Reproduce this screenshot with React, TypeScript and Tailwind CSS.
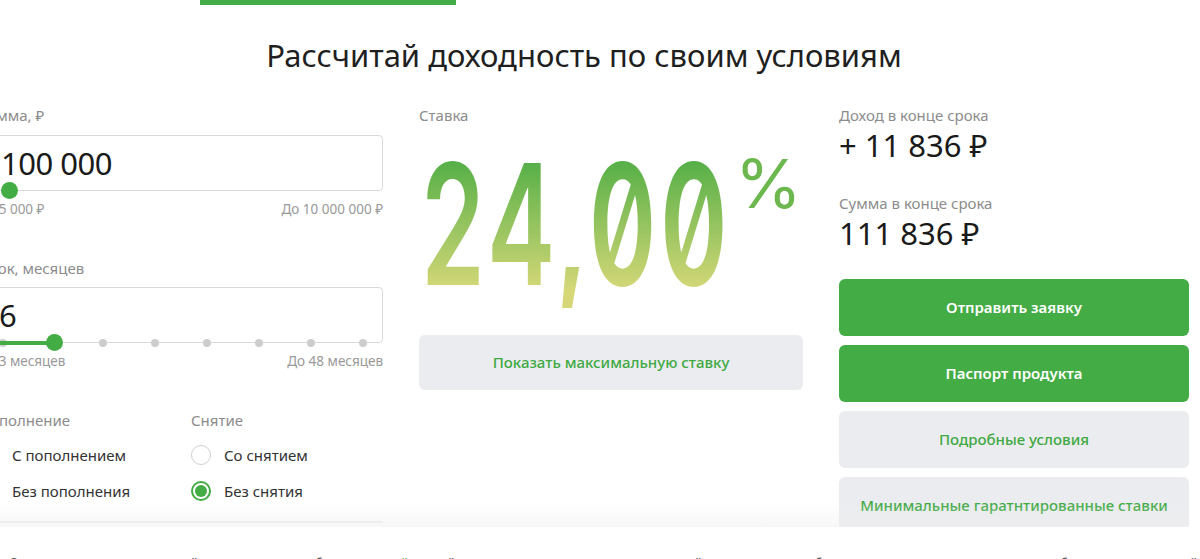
import React from 'react'

const termDots = [24, 124, 176, 228, 280, 332, 384]

function Label({ children }: { children: React.ReactNode }) {
  return <div className="h-5 text-[15px] leading-5 text-[#8c8c8c] whitespace-nowrap">{children}</div>
}

function Radio({ checked, label }: { checked?: boolean; label: string }) {
  return (
    <div className="flex h-6 items-center gap-[13px]">
      {checked ? (
        <span className="flex h-5 w-5 items-center justify-center rounded-full border-2 border-[#43ac45]">
          <span className="h-3 w-3 rounded-full bg-[#43ac45]" />
        </span>
      ) : (
        <span className="h-5 w-5 rounded-full border-[1.5px] border-[#cfcfcf]" />
      )}
      <span className="text-[15px] text-[#333]">{label}</span>
    </div>
  )
}

function Button({ green, children }: { green?: boolean; children: React.ReactNode }) {
  return (
    <div
      className={
        'flex h-[57px] shrink-0 items-center justify-center rounded-[6px] text-[15px] ' +
        (green ? 'bg-[#43ac45] font-semibold text-white' : 'bg-[#ebecef] font-medium text-[#3fa943]')
      }
    >
      {children}
    </div>
  )
}

export default function App() {
  return (
    <div className="h-[559px] w-full overflow-hidden bg-white font-['Noto_Sans',sans-serif] text-[#1a1a1a]">
      <div className="ml-[200px] h-[5px] w-[256px] bg-[#43ac45]" />

      <div className="ml-[-21px] w-[1210px]">
        <h2 className="mt-[30px] text-center text-[31px] leading-[40px] text-[#1f1f1f]">
          Рассчитай доходность по своим условиям
        </h2>

        <div className="relative mt-[30px] flex h-[422px] gap-9 overflow-hidden">
          {/* left: inputs */}
          <div className="w-[404px] shrink-0">
            <Label>Сумма, ₽</Label>
            <div className="relative mt-[10px] flex h-[56px] items-center rounded-[4px] border border-[#d9d9d9] pl-[21px]">
              <span className="text-[31px] tracking-[-0.5px]">100 000</span>
              <span className="absolute bottom-[-9px] left-[21px] h-[17px] w-[17px] rounded-full bg-[#43ac45]" />
            </div>
            <div className="mt-[9px] flex justify-between pl-[2px] text-[13.5px] leading-[18px] text-[#999]">
              <span>от 5 000 ₽</span>
              <span>До 10 000 000 ₽</span>
            </div>

            <div className="mt-[40px]">
              <Label>Срок, месяцев</Label>
            </div>
            <div className="relative mt-[9px] flex h-[56px] items-center rounded-[4px] border border-[#d9d9d9] pl-[19px]">
              <span className="text-[31px]">6</span>
              {termDots.map((x) => (
                <span
                  key={x}
                  className="absolute bottom-[-4.5px] h-[8px] w-[8px] -translate-x-1/2 rounded-full bg-[#cdcdcd]"
                  style={{ left: x - 1 }}
                />
              ))}
              <span className="absolute bottom-[-2.5px] left-[-1px] h-[4px] w-[76px] bg-[#43ac45]" />
              <span className="absolute bottom-[-9px] left-[66px] h-[17px] w-[17px] rounded-full bg-[#43ac45]" />
            </div>
            <div className="mt-[9px] flex justify-between pl-[2px] text-[13.5px] leading-[18px] text-[#999]">
              <span>от 3 месяцев</span>
              <span>До 48 месяцев</span>
            </div>

            <div className="mt-[40px] grid grid-cols-[212px_1fr] border-b-2 border-[#ececec] pb-[18px]">
              <div>
                <Label>Пополнение</Label>
                <div className="mt-[13px] flex flex-col gap-3">
                  <Radio label="С пополнением" />
                  <Radio label="Без пополнения" checked />
                </div>
              </div>
              <div>
                <Label>Снятие</Label>
                <div className="mt-[13px] flex flex-col gap-3">
                  <Radio label="Со снятием" />
                  <Radio label="Без снятия" checked />
                </div>
              </div>
            </div>
          </div>

          {/* middle: rate */}
          <div className="w-[384px] shrink-0">
            <Label>Ставка</Label>
            <div className="mt-[15px] flex h-[168px] items-start pl-[2px]">
              <div className="w-[314px] shrink-0">
                <span className="inline-block origin-top-left scale-x-[0.61] whitespace-nowrap bg-[linear-gradient(to_bottom,#55af47_12%,#d6d878_90%)] bg-clip-text font-['Inter',sans-serif] text-[168px] font-semibold leading-none tracking-[6px] text-transparent slashed-zero">
                  24,00
                </span>
              </div>
              <span className="mt-[9px] font-['Inter',sans-serif] text-[68px] font-normal leading-none text-[#6cb84e]">%</span>
            </div>
            <div className="mt-[27px] flex h-[55px] items-center justify-center rounded-[6px] bg-[#ebecef] text-[15px] font-medium text-[#3fa943]">
              Показать максимальную ставку
            </div>
          </div>

          {/* right: result */}
          <div className="flex w-[350px] shrink-0 flex-col">
            <Label>Доход в конце срока</Label>
            <div className="mt-[2px] text-[31px] leading-9 whitespace-nowrap">+ 11 836 ₽</div>
            <div className="mt-[30px]">
              <Label>Сумма в конце срока</Label>
            </div>
            <div className="mt-[2px] text-[31px] leading-9 whitespace-nowrap">111 836 ₽</div>
            <div className="mt-[28px] flex flex-col gap-[9px]">
              <Button green>Отправить заявку</Button>
              <Button green>Паспорт продукта</Button>
              <Button>Подробные условия</Button>
              <Button>Минимальные гаратнтированные ставки</Button>
            </div>
          </div>

          <div className="pointer-events-none absolute inset-x-0 bottom-0 h-[24px] bg-gradient-to-b from-white/0 to-[#efefef]/50" />
        </div>
      </div>

      <p className="mt-[27px] ml-[8px] whitespace-nowrap text-[14px] leading-5 text-[#555]">
        © Расчет носит справочный характер. Подробности на <span className="text-[#43ac45]">сайте</span> (действующие
        условия и ставки уточняйте в отделениях банка) и в документах о вкладе, опубликованных на сайте банка
      </p>
    </div>
  )
}
